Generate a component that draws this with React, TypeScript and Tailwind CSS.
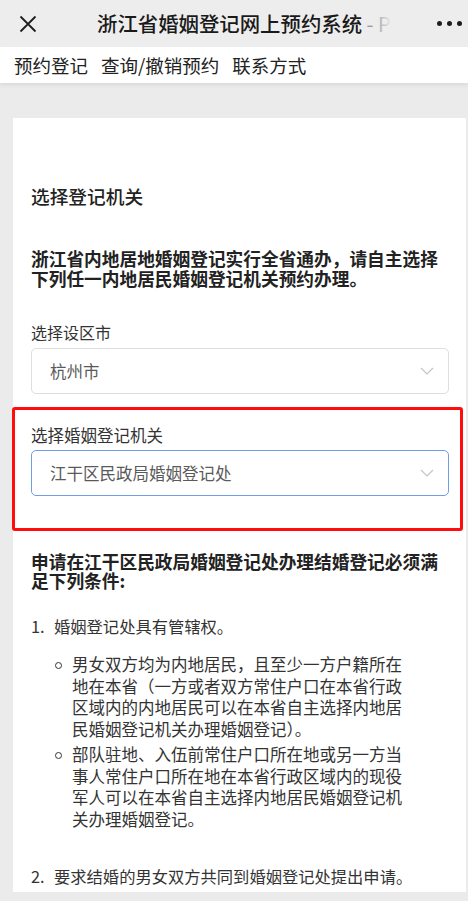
const cjk = { fontFamily: '"Noto Sans CJK SC", "Noto Sans", sans-serif' };

function Chevron() {
  return (
    <svg width="14" height="8" viewBox="0 0 14 8" className="shrink-0">
      <path d="M1 1 L7 7 L13 1" fill="none" stroke="#c4c4c4" strokeWidth="1.2" />
    </svg>
  );
}

function SelectBox({ value, focused = false }: { value: string; focused?: boolean }) {
  return (
    <div
      className={`flex h-[46px] items-center justify-between rounded-[5px] border pl-[18px] pr-[14px] ${
        focused ? 'border-[#6f9fe2]' : 'border-[#dedede]'
      }`}
    >
      <span className="text-[16.5px] leading-[22px] text-[#5a5a5a]">{value}</span>
      <Chevron />
    </div>
  );
}

function Bullet({ children }: { children: React.ReactNode }) {
  return (
    <li className="flex items-start">
      <span className="mt-[7.5px] ml-[24px] h-[7px] w-[7px] shrink-0 rounded-full border-[1.3px] border-[#333]" />
      <span className="ml-[10px] w-[338px] text-[16.5px] leading-[21.5px] text-[#333]">{children}</span>
    </li>
  );
}

export default function App() {
  return (
    <div className="min-h-[901px] w-[468px] bg-[#ebebeb]" style={cjk}>
      {/* 顶部标题栏 */}
      <div className="flex h-[47px] items-center bg-[#eeeded] pl-[19px] pr-[6px]">
        <svg width="18" height="18" viewBox="0 0 18 18" className="shrink-0">
          <path d="M1.5 1.5 L16.5 16.5 M16.5 1.5 L1.5 16.5" stroke="#1e1e1e" strokeWidth="1.8" fill="none" />
        </svg>
        <div className="relative ml-[60px] w-[295px] overflow-hidden whitespace-nowrap">
          <span className="text-[20.4px] font-medium leading-[26px] text-[#1a1a1a]">浙江省婚姻登记网上预约系统</span>
          <span className="text-[20px] leading-[26px] text-[#9a9a9a]"> - P</span>
          <div className="absolute top-0 right-0 h-full w-[18px] bg-gradient-to-r from-transparent to-[#eeeded]" />
        </div>
        <div className="ml-auto flex items-center gap-[5px]">
          <span className="h-[5px] w-[5px] rounded-full bg-[#1e1e1e]" />
          <span className="h-[5px] w-[5px] rounded-full bg-[#1e1e1e]" />
          <span className="h-[5px] w-[5px] rounded-full bg-[#1e1e1e]" />
        </div>
      </div>

      {/* 导航 */}
      <div className="relative flex h-[36px] items-center gap-[13px] bg-white pl-[14px] shadow-[0_2px_4px_rgba(0,0,0,0.08)]">
        <span className="text-[18.5px] leading-[24px] text-[#222]">预约登记</span>
        <span className="text-[18.5px] leading-[24px] text-[#222]">查询/撤销预约</span>
        <span className="text-[18.5px] leading-[24px] text-[#222]">联系方式</span>
      </div>

      {/* 内容卡片 */}
      <div className="mt-[35px] ml-[13px] mr-[2px] bg-white pt-[65px] pr-[17px] pb-[5px] pl-[18px]">
        <h2 className="text-[18.7px] font-medium leading-[26px] text-[#222]">选择登记机关</h2>

        <p className="mt-[40px] text-[17.7px] font-bold leading-[19.5px] text-[#222]">
          浙江省内地居地婚姻登记实行全省通办，请自主选择下列任一内地居民婚姻登记机关预约办理。
        </p>

        <div className="mt-[33px] text-[16px] leading-[22px] text-[#333]">选择设区市</div>
        <div className="mt-[5px]">
          <SelectBox value="杭州市" />
        </div>

        <div className="mt-[13px] -mr-[14px] -ml-[19px] rounded-[3px] border-[3px] border-[#ff0d0d] pt-[14px] pr-[11px] pb-[32px] pl-[16px]">
          <div className="text-[16.5px] leading-[22px] text-[#333]">选择婚姻登记机关</div>
          <div className="mt-[4px]">
            <SelectBox value="江干区民政局婚姻登记处" focused />
          </div>
        </div>

        <p className="mt-[21px] text-[17.7px] font-bold leading-[19px] text-[#222]">
          申请在江干区民政局婚姻登记处办理结婚登记必须满足下列条件:
        </p>

        <div className="mt-[25px] flex text-[16.3px] leading-[22px] text-[#333]">
          <span className="w-[23px] shrink-0">1.</span>
          <span>婚姻登记处具有管辖权。</span>
        </div>

        <ul className="mt-[17px] flex flex-col gap-[4px]">
          <Bullet>
            男女双方均为内地居民，且至少一方户籍所在地在本省（一方或者双方常住户口在本省行政区域内的内地居民可以在本省自主选择内地居民婚姻登记机关办理婚姻登记）。
          </Bullet>
          <Bullet>
            部队驻地、入伍前常住户口所在地或另一方当事人常住户口所在地在本省行政区域内的现役军人可以在本省自主选择内地居民婚姻登记机关办理婚姻登记。
          </Bullet>
        </ul>

        <div className="mt-[35px] flex text-[16.3px] leading-[22px] text-[#333]">
          <span className="w-[23px] shrink-0">2.</span>
          <span>要求结婚的男女双方共同到婚姻登记处提出申请。</span>
        </div>
      </div>
    </div>
  );
}
